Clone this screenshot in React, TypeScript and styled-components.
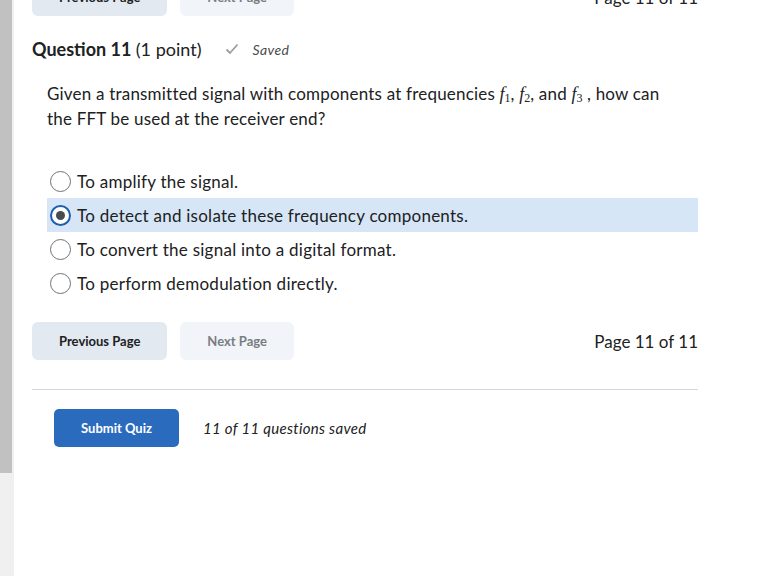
import React from 'react';
import styled, { createGlobalStyle } from 'styled-components';

const GlobalStyle = createGlobalStyle`
  html, body {
    margin: 0;
    padding: 0;
    background: #ffffff;
    overflow: hidden;
  }
  body {
    font-family: Lato, "Open Sans", sans-serif;
    color: #202122;
  }
`;

const Frame = styled.div`
  display: flex;
  width: 763px;
  height: 576px;
  overflow: hidden;
`;

const ScrollTrack = styled.div`
  width: 14px;
  flex-shrink: 0;
  background: #f0f0f0;
  display: flex;
  flex-direction: column;
`;

const ScrollThumb = styled.div`
  width: 12px;
  height: 473px;
  background: #c1c1c1;
`;

const Content = styled.div`
  width: 666px;
  margin: -22px 0 0 18px;
  display: flex;
  flex-direction: column;
`;

const NavRow = styled.div`
  display: flex;
  align-items: center;
  gap: 13px;
`;

const NavButton = styled.button<{ disabled?: boolean }>`
  height: 38px;
  padding: 0 27px;
  border: none;
  border-radius: 6px;
  font-family: Lato, sans-serif;
  font-size: 13px;
  font-weight: 700;
  background: ${p => (p.disabled ? '#f1f4f8' : '#e3e9f1')};
  color: ${p => (p.disabled ? '#7a7d80' : '#202122')};
`;

const PageCount = styled.div`
  margin-left: auto;
  font-size: 17px;
  color: #202122;
`;

const Heading = styled.div`
  display: flex;
  align-items: center;
  margin-top: 21px;
  height: 24px;
`;

const Title = styled.h2`
  margin: 0;
  font-size: 18px;
  font-weight: 700;
  color: #202122;
  span {
    font-weight: 400;
  }
`;

const SavedTag = styled.div`
  display: flex;
  align-items: center;
  gap: 13px;
  margin-left: 24px;
  font-size: 14px;
  letter-spacing: 0.4px;
  font-style: italic;
  color: #494c4e;
`;

const QuestionText = styled.p`
  margin: 20px 18px 0 15px;
  font-size: 17px;
  letter-spacing: 0.2px;
  line-height: 25px;
  color: #202122;
`;

const MathF = styled.span`
  font-family: "Liberation Serif", serif;
  font-style: italic;
  font-size: 18px;
  line-height: 0;
  letter-spacing: 0;
  sub {
    font-style: normal;
    font-size: 12px;
    line-height: 0;
    vertical-align: -2px;
  }
`;

const Options = styled.div`
  display: flex;
  flex-direction: column;
  margin: 33px 0 0 15px;
`;

const Option = styled.label<{ selected?: boolean }>`
  display: flex;
  align-items: center;
  gap: 6px;
  height: 34px;
  padding-left: 3px;
  font-size: 17px;
  letter-spacing: 0.25px;
  color: #202122;
  background: ${p => (p.selected ? '#d6e6f7' : 'transparent')};
`;

const Radio = styled.span<{ checked?: boolean }>`
  width: 21px;
  height: 21px;
  box-sizing: border-box;
  border-radius: 50%;
  border: ${p => (p.checked ? '2px solid #1c5fb0' : '1px solid #6e7376')};
  background: #ffffff;
  display: flex;
  align-items: center;
  justify-content: center;
  &::after {
    content: '';
    display: ${p => (p.checked ? 'block' : 'none')};
    width: 9px;
    height: 9px;
    border-radius: 50%;
    background: #494c4e;
  }
`;

const BottomNav = styled(NavRow)`
  margin-top: 22px;
`;

const Divider = styled.hr`
  margin: 29px 0 0;
  border: none;
  border-top: 1px solid #d3d9e3;
`;

const SubmitRow = styled.div`
  display: flex;
  align-items: center;
  gap: 24px;
  margin: 19px 0 0 22px;
`;

const SubmitButton = styled.button`
  height: 38px;
  width: 125px;
  border: none;
  border-radius: 5px;
  background: #2b6bbd;
  color: #ffffff;
  font-family: Lato, sans-serif;
  font-size: 13px;
  font-weight: 700;
`;

const SavedCount = styled.span`
  font-size: 15px;
  letter-spacing: 0.3px;
  font-style: italic;
  color: #202122;
`;

const F = ({ n }: { n: number }) => (
  <MathF>
    f<sub>{n}</sub>
  </MathF>
);

const options = [
  'To amplify the signal.',
  'To detect and isolate these frequency components.',
  'To convert the signal into a digital format.',
  'To perform demodulation directly.',
];

const App: React.FC = () => {
  const selected = 1;
  return (
    <>
      <GlobalStyle />
      <Frame>
        <ScrollTrack>
          <ScrollThumb />
        </ScrollTrack>
        <Content>
          <NavRow>
            <NavButton>Previous Page</NavButton>
            <NavButton disabled>Next Page</NavButton>
            <PageCount>Page 11 of 11</PageCount>
          </NavRow>
          <Heading>
            <Title>
              Question 11 <span>(1 point)</span>
            </Title>
            <SavedTag>
              <svg width="14" height="12" viewBox="0 0 14 12">
                <polyline points="1.5,6.5 5,10 12.5,1.5" fill="none" stroke="#9a9ea2" strokeWidth="1.8" />
              </svg>
              Saved
            </SavedTag>
          </Heading>
          <QuestionText>
            Given a transmitted signal with components at frequencies <F n={1} />, <F n={2} />, and <F n={3} /> , how can
            the FFT be used at the receiver end?
          </QuestionText>
          <Options>
            {options.map((o, i) => (
              <Option key={i} selected={i === selected}>
                <Radio checked={i === selected} />
                {o}
              </Option>
            ))}
          </Options>
          <BottomNav>
            <NavButton>Previous Page</NavButton>
            <NavButton disabled>Next Page</NavButton>
            <PageCount>Page 11 of 11</PageCount>
          </BottomNav>
          <Divider />
          <SubmitRow>
            <SubmitButton>Submit Quiz</SubmitButton>
            <SavedCount>11 of 11 questions saved</SavedCount>
          </SubmitRow>
        </Content>
      </Frame>
    </>
  );
};

export default App;
